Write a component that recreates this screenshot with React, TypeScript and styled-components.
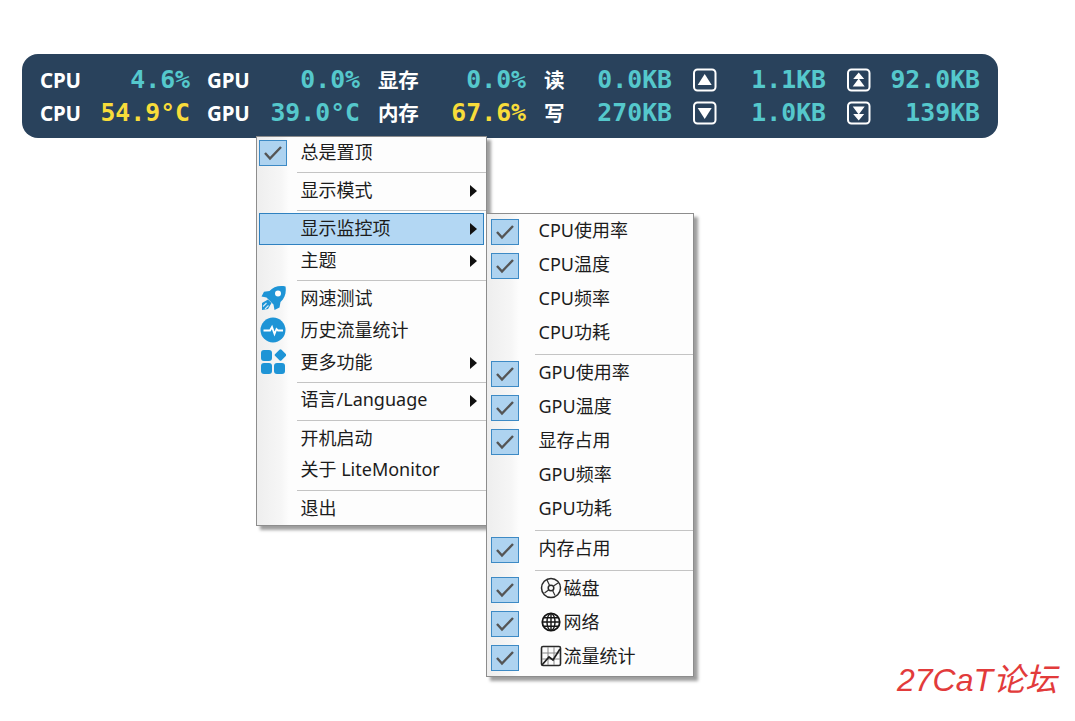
import React from "react";
import styled, { createGlobalStyle } from "styled-components";

const Global = createGlobalStyle`
  html, body { margin: 0; padding: 0; background: #fff; }
  body { width: 1075px; height: 721px; overflow: hidden; position: relative; font-family: "Noto Sans", "Noto Sans CJK SC", sans-serif; }
`;

const Page = styled.div`
  position: relative;
  width: 1075px;
  height: 721px;
  padding: 54px 0 0 22px;
  box-sizing: border-box;
`;

const Bar = styled.div`
  width: 976px;
  height: 84px;
  box-sizing: border-box;
  padding: 9px 18px 9px 19px;
  background: #29425c;
  border-radius: 16px;
  display: flex;
  gap: 18px;
`;

const Group = styled.div<{ $w: number; $ml?: number }>`
  flex: none;
  width: ${(p) => p.$w}px;
  margin-left: ${(p) => p.$ml ?? 0}px;
  display: grid;
  grid-template-rows: 33px 33px;
`;

const Line = styled.div`
  display: flex;
  align-items: center;
  justify-content: space-between;
`;

const Label = styled.span<{ $cjk?: boolean }>`
  font-family: "Noto Sans", "Noto Sans CJK SC", sans-serif;
  font-size: 20.5px;
  font-weight: 700;
  color: #fff;
  letter-spacing: -0.2px;
  margin-left: ${(p) => (p.$cjk ? 0 : -1)}px;
  margin-bottom: ${(p) => (p.$cjk ? 2 : 0)}px;
`;

const Value = styled.span<{ $warn?: boolean }>`
  font-family: "DejaVu Sans Mono", monospace;
  font-size: 24.8px;
  font-weight: 700;
  color: ${(p) => (p.$warn ? "#f8dc3a" : "#55c8cc")};
`;

const Menu = styled.div`
  position: absolute;
  box-sizing: border-box;
  border: 1px solid #8d8d8d;
  background: linear-gradient(to right, #eeeeee 0, #f6f6f6 24px, #fdfdfd 32px);
  box-shadow: 4px 4px 3px rgba(0, 0, 0, 0.38);
  color: #1c1c1c;
`;

const MainMenu = styled(Menu)`
  left: 256px;
  top: 136px;
  width: 231px;
  height: 390px;
`;

const SubMenu = styled(Menu)`
  left: 486px;
  top: 213px;
  width: 208px;
  height: 464px;
  padding-top: 1px;
`;

const Row = styled.div<{ $h: number; $active?: boolean; $textLeft: number }>`
  position: relative;
  height: ${(p) => p.$h}px;
  box-sizing: border-box;
  display: flex;
  align-items: center;
  padding-left: ${(p) => p.$textLeft}px;
  margin: 0 2px 0 2px;
  font-size: 18px;
  line-height: 24px;
  background: ${(p) => (p.$active ? "#b3d7f3" : "transparent")};
  outline: ${(p) => (p.$active ? "1px solid #2f81c0" : "none")};
  outline-offset: -1px;
`;

const RowText = styled.span<{ $shift: number }>`
  position: relative;
  top: -${(p) => p.$shift}px;
  display: flex;
  align-items: center;
  white-space: nowrap;
`;

const Check = styled.span<{ $left: number }>`
  position: absolute;
  left: ${(p) => p.$left}px;
  top: 50%;
  width: 28px;
  height: 26px;
  margin-top: -13px;
  box-sizing: border-box;
  background: #aed3f0;
  border: 1px solid #3d8ac5;
  display: flex;
  align-items: center;
  justify-content: center;
`;

const Glyph = styled.span`
  position: absolute;
  left: 0;
  top: 50%;
  width: 28px;
  height: 28px;
  margin-top: -15px;
  display: flex;
  align-items: center;
  justify-content: center;
`;

const Arrow = styled.span`
  position: absolute;
  right: 7px;
  top: 50%;
  margin-top: -6px;
  width: 0;
  height: 0;
  border-left: 7px solid #111;
  border-top: 6px solid transparent;
  border-bottom: 6px solid transparent;
`;

const Sep = styled.div<{ $left: number }>`
  height: 6px;
  display: flex;
  align-items: center;
  padding-left: ${(p) => p.$left}px;
  &::after {
    content: "";
    display: block;
    flex: 1;
    height: 1px;
    background: #c4c4c4;
  }
`;

const InlineIcon = styled.svg`
  flex: none;
  width: 22px;
  height: 22px;
  margin: 0 2px 0 1px;
`;

const Watermark = styled.div`
  position: absolute;
  left: 897px;
  top: 660px;
  width: 166px;
  font-family: "Liberation Sans", "Noto Sans CJK SC", sans-serif;
  font-size: 32px;
  line-height: 40px;
  font-style: italic;
  color: #e23b3b;
  white-space: nowrap;
`;

const CheckMark = () => (
  <svg width="20" height="16" viewBox="0 0 20 16">
    <path d="M2 8 L7 13.5 L18 2" fill="none" stroke="#555" strokeWidth="2.4" />
  </svg>
);

const BarIconBox = styled.svg`
  display: block;
  width: 24px;
  height: 24px;
`;

const BarIcon = ({ kind }: { kind: "up" | "down" | "upAll" | "downAll" }) => (
  <BarIconBox viewBox="0 0 24 24">
    <rect x="1" y="1.5" width="21.5" height="21" rx="3.5" fill="none" stroke="#fff" strokeWidth="2" />
    {kind === "up" && <path d="M11.7 6 L18.7 17 H4.7 Z" fill="#fff" />}
    {kind === "down" && <path d="M11.7 18 L18.7 7 H4.7 Z" fill="#fff" />}
    {kind === "upAll" && <path d="M11.7 4.5 L17.2 11 H6.2 Z M11.7 10.5 L17.7 18.5 H5.7 Z" fill="#fff" />}
    {kind === "downAll" && <path d="M5.7 5.5 H17.7 L11.7 13.5 Z M6.2 13 H17.2 L11.7 19.5 Z" fill="#fff" />}
  </BarIconBox>
);

const Rocket = () => (
  <svg width="26" height="26" viewBox="0 0 26 26">
    <path d="M25.5 1.5 C19 0 13 2 9.5 6 L4 6.8 L1.5 11.5 L6.5 12.5 L13.5 19.5 L14.5 25 L19.5 22.5 L20.5 17 C25 13 26.5 7.5 25.5 1.5 Z" fill="#1e94d6" />
    <circle cx="18" cy="8.5" r="3" fill="#fdfdfd" />
    <path d="M2 18 L8 14.5 L11.5 18 L8 24 L2 25 Z" fill="#1e94d6" />
    <path d="M3 21.5 L6.5 18 M5 24 L8.5 20.5" stroke="#d5ebf7" strokeWidth="1.1" fill="none" />
  </svg>
);

const Pulse = () => (
  <svg width="26" height="26" viewBox="0 0 26 26">
    <circle cx="13" cy="13" r="12.5" fill="#1e94d6" />
    <path d="M3.5 13.5 H10 L12 10 L14.5 17 L16.5 12 L18 13.5 H23" fill="none" stroke="#fff" strokeWidth="1.8" />
  </svg>
);

const Apps = () => (
  <svg width="26" height="26" viewBox="0 0 26 26">
    <rect x="1" y="1" width="11" height="11" rx="3" fill="#1e94d6" />
    <rect x="16" y="1.5" width="9" height="9" rx="1.5" transform="rotate(45 20.5 6)" fill="#1e94d6" />
    <rect x="1" y="14" width="11" height="11" rx="3" fill="#1e94d6" />
    <rect x="14" y="14" width="11" height="11" rx="3" fill="#1e94d6" />
  </svg>
);

const Disk = () => (
  <InlineIcon viewBox="0 0 22 22">
    <circle cx="11" cy="11" r="9.5" fill="none" stroke="#2a2a2a" strokeWidth="1.5" />
    <circle cx="11" cy="11" r="2.8" fill="none" stroke="#2a2a2a" strokeWidth="1.5" />
    <path d="M7 3 L9.6 8.6 M15 18.5 L12.6 13.4 M13.5 9 L18 6 M4.5 16 L8.6 13" stroke="#333" strokeWidth="1.2" fill="none" />
  </InlineIcon>
);

const Globe = () => (
  <InlineIcon viewBox="0 0 22 22">
    <circle cx="11" cy="11" r="8.7" fill="none" stroke="#151515" strokeWidth="1.8" />
    <ellipse cx="11" cy="11" rx="4" ry="8.5" fill="none" stroke="#151515" strokeWidth="1.4" />
    <path d="M11 2.5 V19.5 M2.5 11 H19.5 M3.8 6.8 H18.2 M3.8 15.2 H18.2" stroke="#151515" strokeWidth="1.4" fill="none" />
  </InlineIcon>
);

const ChartIcon = () => (
  <InlineIcon viewBox="0 0 22 22">
    <rect x="1.5" y="1.5" width="19" height="19" rx="1.5" fill="none" stroke="#2a2a2a" strokeWidth="1.6" />
    <path d="M8 2 V20 M14 2 V20 M2 8 H20 M2 14 H20" stroke="#888" strokeWidth="1" fill="none" />
    <path d="M2 20 L9 12 L13 15 L20 4" stroke="#222" strokeWidth="1.7" fill="none" />
  </InlineIcon>
);

type Item = {
  t?: React.ReactNode;
  checked?: boolean;
  arrow?: boolean;
  active?: boolean;
  glyph?: React.ReactNode;
  sep?: boolean;
  latin?: boolean;
};

const mainItems: Item[] = [
  { t: "总是置顶", checked: true },
  { sep: true },
  { t: "显示模式", arrow: true },
  { sep: true },
  { t: "显示监控项", arrow: true, active: true },
  { t: "主题", arrow: true },
  { sep: true },
  { t: "网速测试", glyph: <Rocket /> },
  { t: "历史流量统计", glyph: <Pulse /> },
  { t: "更多功能", arrow: true, glyph: <Apps /> },
  { sep: true },
  { t: "语言/Language", arrow: true, latin: true },
  { sep: true },
  { t: "开机启动" },
  { t: "关于 LiteMonitor", latin: true },
  { sep: true },
  { t: "退出" },
];

const subItems: Item[] = [
  { t: "CPU使用率", checked: true },
  { t: "CPU温度", checked: true },
  { t: "CPU频率" },
  { t: "CPU功耗" },
  { sep: true },
  { t: "GPU使用率", checked: true },
  { t: "GPU温度", checked: true },
  { t: "显存占用", checked: true },
  { t: "GPU频率" },
  { t: "GPU功耗" },
  { sep: true },
  { t: "内存占用", checked: true },
  { sep: true },
  { t: <><Disk />磁盘</>, checked: true },
  { t: <><Globe />网络</>, checked: true },
  { t: <><ChartIcon />流量统计</>, checked: true },
];

type RowsProps = { items: Item[]; h: number; textLeft: number; sepLeft: number; shift: number; checkLeft: number };

const MenuRows = ({ items, h, textLeft, sepLeft, shift, checkLeft }: RowsProps) => (
  <>
    {items.map((it, i) =>
      it.sep ? (
        <Sep key={i} $left={sepLeft} />
      ) : (
        <Row key={i} $h={h} $active={it.active} $textLeft={textLeft}>
          {it.checked && <Check $left={checkLeft}><CheckMark /></Check>}
          {it.glyph && <Glyph>{it.glyph}</Glyph>}
          <RowText $shift={it.latin ? shift + 1 : shift}>{it.t}</RowText>
          {it.arrow && <Arrow />}
        </Row>
      )
    )}
  </>
);

export default function App() {
  return (
    <Page>
      <Global />
      <Bar>
        <Group $w={149}>
          <Line><Label>CPU</Label><Value>4.6%</Value></Line>
          <Line><Label>CPU</Label><Value $warn>54.9°C</Value></Line>
        </Group>
        <Group $w={152}>
          <Line><Label>GPU</Label><Value>0.0%</Value></Line>
          <Line><Label>GPU</Label><Value>39.0°C</Value></Line>
        </Group>
        <Group $w={148}>
          <Line><Label $cjk>显存</Label><Value>0.0%</Value></Line>
          <Line><Label $cjk>内存</Label><Value $warn>67.6%</Value></Line>
        </Group>
        <Group $w={128}>
          <Line><Label $cjk>读</Label><Value>0.0KB</Value></Line>
          <Line><Label $cjk>写</Label><Value>270KB</Value></Line>
        </Group>
        <Group $w={133} $ml={3}>
          <Line><BarIcon kind="up" /><Value>1.1KB</Value></Line>
          <Line><BarIcon kind="down" /><Value>1.0KB</Value></Line>
        </Group>
        <Group $w={133} $ml={3}>
          <Line><BarIcon kind="upAll" /><Value>92.0KB</Value></Line>
          <Line><BarIcon kind="downAll" /><Value>139KB</Value></Line>
        </Group>
      </Bar>
      <MainMenu>
        <MenuRows items={mainItems} h={32} textLeft={41.5} sepLeft={40} shift={1} checkLeft={0} />
      </MainMenu>
      <SubMenu>
        <MenuRows items={subItems} h={34} textLeft={49.5} sepLeft={48} shift={2} checkLeft={2} />
      </SubMenu>
      <Watermark>27CaT论坛</Watermark>
    </Page>
  );
}
